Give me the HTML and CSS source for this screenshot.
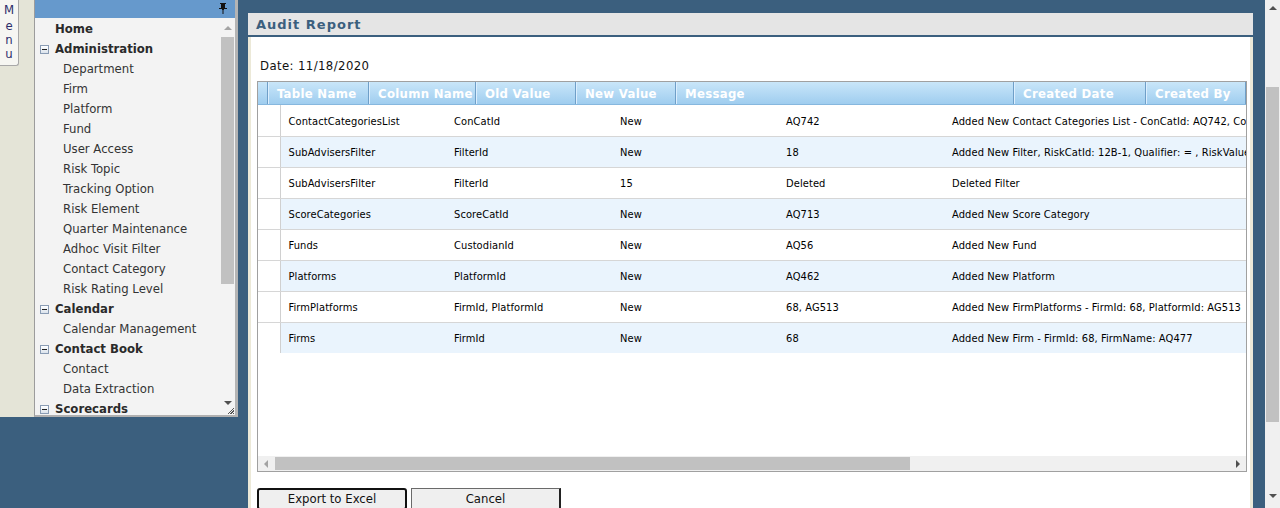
FILE: index.html
```html
<!DOCTYPE html>
<html lang="en">
<head>
<meta charset="utf-8">
<title>Audit Report</title>
<link rel="stylesheet" href="styles.css">
</head>
<body>
<div class="page">
  <aside class="side">
    <div class="tabstrip">
      <div class="menutab"><span class="cap">M</span><span>e</span><span>n</span><span>u</span></div>
    </div>
    <div class="menupanel">
      <div class="menuhead">
        <svg class="pin" width="8" height="11" viewBox="0 0 8 11"><path d="M1 0h6v1H6v4h2v1H0V5h2V1H1z M3 6h2v1H4.5v4h-1V7H3z" fill="#111"/></svg>
      </div>
      <div class="menubody">
        <ul class="menulist">
          <li class="top">Home</li>
          <li class="group"><span class="minus"></span>Administration</li>
          <li class="item">Department</li>
          <li class="item">Firm</li>
          <li class="item">Platform</li>
          <li class="item">Fund</li>
          <li class="item">User Access</li>
          <li class="item">Risk Topic</li>
          <li class="item">Tracking Option</li>
          <li class="item">Risk Element</li>
          <li class="item">Quarter Maintenance</li>
          <li class="item">Adhoc Visit Filter</li>
          <li class="item">Contact Category</li>
          <li class="item">Risk Rating Level</li>
          <li class="group"><span class="minus"></span>Calendar</li>
          <li class="item">Calendar Management</li>
          <li class="group"><span class="minus"></span>Contact Book</li>
          <li class="item">Contact</li>
          <li class="item">Data Extraction</li>
          <li class="group"><span class="minus"></span>Scorecards</li>
        </ul>
        <div class="menuscroll">
          <span class="arr up light"></span>
          <span class="mthumb"></span>
          <span class="arr down dark"></span>
          <span class="grip"></span>
        </div>
      </div>
    </div>
  </aside>

  <main class="main">
    <section class="panel">
      <h1 class="paneltitle">Audit Report</h1>
      <div class="panelbody">
        <div class="date">Date: 11/18/2020</div>
        <div class="grid">
          <div class="gridhead">
            <div class="hc hc-first"></div>
            <div class="hc w101">Table Name</div>
            <div class="hc w107">Column Name</div>
            <div class="hc w100">Old Value</div>
            <div class="hc w100">New Value</div>
            <div class="hc w338">Message</div>
            <div class="hc w132">Created Date</div>
            <div class="hc w100">Created By</div>
          </div>
          <div class="gridrows">
            <table class="rows">
              <colgroup><col class="c0"><col class="c1"><col class="c1"><col class="c1"><col class="c1"><col class="c5"></colgroup>
              <tbody>
                <tr><td></td><td>ContactCategoriesList</td><td>ConCatId</td><td>New</td><td>AQ742</td><td>Added New Contact Categories List - ConCatId: AQ742, ConCatName: AQ742</td></tr>
                <tr><td></td><td>SubAdvisersFilter</td><td>FilterId</td><td>New</td><td>18</td><td>Added New Filter, RiskCatId: 12B-1, Qualifier: = , RiskValue: 1</td></tr>
                <tr><td></td><td>SubAdvisersFilter</td><td>FilterId</td><td>15</td><td>Deleted</td><td>Deleted Filter</td></tr>
                <tr><td></td><td>ScoreCategories</td><td>ScoreCatId</td><td>New</td><td>AQ713</td><td>Added New Score Category</td></tr>
                <tr><td></td><td>Funds</td><td>CustodianId</td><td>New</td><td>AQ56</td><td>Added New Fund</td></tr>
                <tr><td></td><td>Platforms</td><td>PlatformId</td><td>New</td><td>AQ462</td><td>Added New Platform</td></tr>
                <tr><td></td><td>FirmPlatforms</td><td>FirmId, PlatformId</td><td>New</td><td>68, AG513</td><td>Added New FirmPlatforms - FirmId: 68, PlatformId: AG513</td></tr>
                <tr><td></td><td>Firms</td><td>FirmId</td><td>New</td><td>68</td><td>Added New Firm - FirmId: 68, FirmName: AQ477</td></tr>
              </tbody>
            </table>
          </div>
          <div class="hscroll">
            <span class="harr left light"></span>
            <div class="htrack"><span class="hthumb"></span></div>
            <span class="harr right dark"></span>
          </div>
        </div>
        <div class="buttons">
          <button class="btn btn-focus" type="button">Export to Excel</button>
          <button class="btn btn-plain" type="button">Cancel</button>
        </div>
      </div>
    </section>
  </main>

  <div class="pagescroll">
    <span class="arr up dark"></span>
    <span class="pthumb"></span>
    <span class="arr down dark"></span>
  </div>
</div>
</body>
</html>
```

FILE: styles.css
```css
* { box-sizing: border-box; }

body {
  margin: 0;
  background: #3b5f7e;
  font-family: "DejaVu Sans Condensed", "DejaVu Sans", sans-serif;
  font-stretch: condensed;
  overflow: hidden;
}

.page {
  display: flex;
  height: 508px;
}

/* ---------- left side ---------- */
.side {
  display: flex;
  flex: none;
  width: 238px;
  height: 417px;
}

.tabstrip {
  width: 34px;
  background: #e4e4d7;
}

.menutab {
  width: 19px;
  height: 66px;
  background: #f6f6f2;
  border-right: 1px solid #a8a8a8;
  border-bottom: 1px solid #a8a8a8;
  border-bottom-right-radius: 3px;
  display: flex;
  flex-direction: column;
  align-items: center;
  padding-top: 3px;
  font-size: 13px;
  line-height: 14px;
  color: #2d2d6a;
}
.menutab .cap { margin-bottom: 2px; }

.menupanel {
  width: 204px;
  display: flex;
  flex-direction: column;
  border-left: 1px solid #9c9c9c;
  border-right: 3px solid #b4b4b4;
  border-bottom: 2px solid #b0b0b0;
}

.menuhead {
  height: 18px;
  background: #6699cc;
  display: flex;
  justify-content: flex-end;
  padding: 3px 8px 0 0;
}

.menubody {
  flex: 1;
  display: flex;
  background: #f3f3f3;
  overflow: hidden;
}

.menulist {
  flex: 1;
  list-style: none;
  margin: 0;
  padding: 1px 0 0 0;
  font-size: 13px;
  line-height: 20px;
  color: #333;
  white-space: nowrap;
}

.menulist li {
  height: 20px;
  display: flex;
  align-items: center;
}

.menulist .top { padding-left: 20px; font-weight: bold; color: #2a2a2a; }
.menulist .group { padding-left: 5px; font-weight: bold; color: #2a2a2a; }
.menulist .item { padding-left: 28px; }

.minus {
  width: 9px;
  height: 9px;
  margin-right: 6px;
  border: 1px solid #8a9cb4;
  background: linear-gradient(#ffffff, #dbe3ec);
  display: flex;
  align-items: center;
  justify-content: center;
}
.minus::before {
  content: "";
  width: 5px;
  height: 1px;
  background: #222;
}

.menuscroll {
  width: 15px;
  flex: none;
  display: flex;
  flex-direction: column;
  align-items: center;
  position: relative;
  padding-top: 8px;
}

.mthumb {
  width: 13px;
  height: 247px;
  margin-top: 7px;
  background: #c1c1c1;
}

.menuscroll .down { margin-top: 117px; }

.grip {
  position: absolute;
  right: 1px;
  bottom: 1px;
  width: 7px;
  height: 7px;
  background: repeating-linear-gradient(135deg, transparent 0 1px, #555 1px 2px);
  clip-path: polygon(100% 0, 100% 100%, 0 100%);
}

/* arrows */
.arr { width: 0; height: 0; border-left: 4px solid transparent; border-right: 4px solid transparent; }
.arr.up { border-bottom: 4px solid #505050; }
.arr.down { border-top: 4px solid #505050; }
.arr.up.light { border-bottom-color: #a3a3a3; }
.harr { width: 0; height: 0; border-top: 4px solid transparent; border-bottom: 4px solid transparent; }
.harr.left { border-right: 4px solid #a3a3a3; }
.harr.right { border-left: 4px solid #505050; }

/* ---------- main ---------- */
.main {
  flex: 1;
  padding: 13px 12px 0 10px;
  min-width: 0;
}

.panel {
  height: 100%;
  display: flex;
  flex-direction: column;
}

.paneltitle {
  margin: 0;
  height: 24px;
  background: #e5e5e5;
  border-bottom: 2px solid #3b5f7e;
  padding: 2px 0 0 8px;
  font-family: "DejaVu Sans", sans-serif;
  font-stretch: normal;
  font-size: 13px;
  line-height: 20px;
  letter-spacing: 1px;
  color: #3b5f7e;
  font-weight: bold;
}

.panelbody {
  flex: 1;
  background: #fff;
  border-left: 3px solid #ece9d8;
  border-right: 3px solid #ece9d8;
  padding: 20px 0 0 6px;
}

.date {
  font-size: 13px;
  line-height: 18px;
  padding-left: 3px;
  color: #111;
  letter-spacing: 0.4px;
}

.grid {
  margin-top: 6px;
  width: 990px;
  height: 391px;
  border: 1px solid #a0a0a0;
  display: flex;
  flex-direction: column;
  overflow: hidden;
}

.gridhead {
  display: flex;
  height: 23px;
  flex: none;
  background: linear-gradient(#c9e6f9, #9fcdef);
  border-bottom: 1px solid #86b7de;
}

.hc {
  flex: none;
  height: 22px;
  border-left: 1px solid #dcefff;
  border-right: 1px solid #6f9fc8;
  padding: 1px 0 0 8px;
  color: #fff;
  font-weight: bold;
  font-size: 13px;
  line-height: 22px;
  letter-spacing: 0.3px;
  white-space: nowrap;
  overflow: hidden;
}
.hc-first { width: 10px; border-left: none; padding: 0; }
.w100 { width: 100px; }
.w101 { width: 101px; }
.w107 { width: 107px; }
.w132 { width: 132px; }
.w338 { width: 338px; }

.gridrows {
  flex: 1;
  overflow: hidden;
}

.rows {
  border-collapse: collapse;
  table-layout: fixed;
  width: 1500px;
  font-size: 11px;
  letter-spacing: 0.1px;
  color: #000;
}
.rows col.c0 { width: 22px; }
.rows col.c1 { width: 166px; }
.rows col.c5 { width: 814px; }

.rows td {
  height: 31px;
  padding: 2px 0 0 8px;
  border-bottom: 1px solid #d6d6d6;
  white-space: nowrap;
  overflow: hidden;
  vertical-align: middle;
}
.rows td:first-child {
  padding: 0;
  border-right: 1px solid #d0d0d0;
  background: #fff;
}
.rows tr:nth-child(even) td { background: #eaf4fd; }
.rows tr:nth-child(even) td:first-child { background: #fff; }
.rows tr:last-child td { border-bottom: none; }

.hscroll {
  flex: none;
  height: 15px;
  background: #f0f0f0;
  display: flex;
  align-items: center;
  padding: 0 6px 0 6px;
}
.htrack {
  flex: 1;
  height: 13px;
  padding-left: 7px;
}
.hthumb {
  display: block;
  width: 635px;
  height: 13px;
  background: #c1c1c1;
}

.buttons {
  display: flex;
  gap: 4px;
  margin-top: 16px;
}

.btn {
  width: 150px;
  height: 22px;
  background: #efefef;
  font-family: "DejaVu Sans Condensed", "DejaVu Sans", sans-serif;
  font-stretch: condensed;
  font-size: 13px;
  color: #111;
  padding: 0;
  line-height: 16px;
}
.btn-focus {
  border: 2px solid #111;
  border-radius: 3px;
}
.btn-plain {
  border: 1px solid #6a6a6a;
  border-right: 2px solid #222;
  border-bottom: 2px solid #222;
}

/* ---------- page scrollbar ---------- */
.pagescroll {
  width: 15px;
  flex: none;
  background: #f0f0f0;
  display: flex;
  flex-direction: column;
  align-items: center;
  padding-top: 6px;
}
.pthumb {
  width: 13px;
  height: 335px;
  margin-top: 77px;
  background: #c1c1c1;
}
.pagescroll .down { margin-top: 72px; }
```
